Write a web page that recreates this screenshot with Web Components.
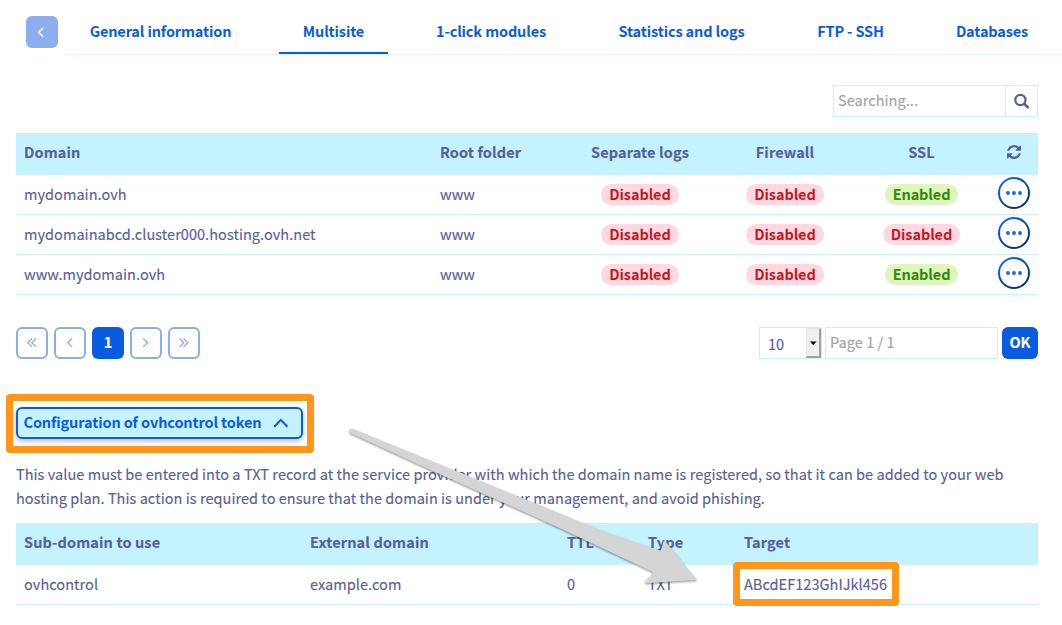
<!DOCTYPE html>
<html lang="en">
<head>
<meta charset="utf-8">
<title>Multisite</title>
<style>
  html, body { margin: 0; background: #fff; }
  body {
    width: 1062px; height: 625px; overflow: hidden; position: relative;
    font-family: "Noto Sans CJK SC", "Open Sans", sans-serif;
    font-size: 14.5px; line-height: 24px; letter-spacing: .05px; color: #565f9f;
    -webkit-text-stroke: .15px currentColor;
    --blue: #095ce0; --ice: #c5f2ff; --pale: #8aaeee;
  }
  main { display: block; padding: 0 24px 0 16px; }
</style>
</head>
<body>
<tab-bar>
  <tab-item style="--w:189px">General information</tab-item>
  <tab-item style="--w:109px" active>Multisite</tab-item>
  <tab-item style="--w:158px">1-click modules</tab-item>
  <tab-item style="--w:175px">Statistics and logs</tab-item>
  <tab-item style="--w:115px">FTP - SSH</tab-item>
  <tab-item style="--w:120px">Databases</tab-item>
</tab-bar>
<main>
  <search-box>Searching...</search-box>

  <data-grid style="--cols:416px 136px 144px 146px 127px 53px">
    <grid-row head>
      <grid-cell>Domain</grid-cell><grid-cell>Root folder</grid-cell>
      <grid-cell mid>Separate logs</grid-cell><grid-cell mid>Firewall</grid-cell>
      <grid-cell mid>SSL</grid-cell><grid-cell end><refresh-icon></refresh-icon></grid-cell>
    </grid-row>
    <grid-row>
      <grid-cell>mydomain.ovh</grid-cell><grid-cell>www</grid-cell>
      <grid-cell mid><state-badge>Disabled</state-badge></grid-cell>
      <grid-cell mid><state-badge>Disabled</state-badge></grid-cell>
      <grid-cell mid><state-badge on>Enabled</state-badge></grid-cell>
      <grid-cell end><more-button></more-button></grid-cell>
    </grid-row>
    <grid-row>
      <grid-cell>mydomainabcd.cluster000.hosting.ovh.net</grid-cell><grid-cell>www</grid-cell>
      <grid-cell mid><state-badge>Disabled</state-badge></grid-cell>
      <grid-cell mid><state-badge>Disabled</state-badge></grid-cell>
      <grid-cell mid><state-badge>Disabled</state-badge></grid-cell>
      <grid-cell end><more-button></more-button></grid-cell>
    </grid-row>
    <grid-row>
      <grid-cell>www.mydomain.ovh</grid-cell><grid-cell>www</grid-cell>
      <grid-cell mid><state-badge>Disabled</state-badge></grid-cell>
      <grid-cell mid><state-badge>Disabled</state-badge></grid-cell>
      <grid-cell mid><state-badge on>Enabled</state-badge></grid-cell>
      <grid-cell end><more-button></more-button></grid-cell>
    </grid-row>
  </data-grid>

  <page-nav></page-nav>
  <token-toggle>Configuration of ovhcontrol token</token-toggle>
  <help-text>This value must be entered into a TXT record at the service provider with which the domain name is registered, so that it can be added to your web<br>hosting plan. This action is required to ensure that the domain is under your management, and avoid phishing.</help-text>

  <data-grid style="--cols:286px 257px 81px 96px 302px">
    <grid-row head>
      <grid-cell>Sub-domain to use</grid-cell><grid-cell>External domain</grid-cell>
      <grid-cell>TTL</grid-cell><grid-cell>Type</grid-cell><grid-cell>Target</grid-cell>
    </grid-row>
    <grid-row>
      <grid-cell>ovhcontrol</grid-cell><grid-cell>example.com</grid-cell>
      <grid-cell>0</grid-cell><grid-cell>TXT</grid-cell><grid-cell>ABcdEF123GhIJkl456</grid-cell>
    </grid-row>
  </data-grid>
</main>
<focus-frame style="left:6px;top:394px;width:308px;height:59px"></focus-frame>
<focus-frame style="left:733px;top:562px;width:166px;height:44px"></focus-frame>
<pointer-arrow></pointer-arrow>

<script>
const define = (name, css, html) => {
  const t = document.createElement('template');
  t.innerHTML = `<style>*{box-sizing:border-box}:host{box-sizing:border-box}${css}</style>${html}`;
  customElements.define(name, class extends HTMLElement {
    constructor() {
      super();
      this.attachShadow({ mode: 'open' }).append(t.content.cloneNode(true));
    }
  });
};

define('tab-bar', `
  :host{display:flex;height:55px}
  .back{width:32px;height:32px;margin:16px 8px 0 26px;border-radius:6px;background:var(--pale);flex:none}
  svg{display:block}
  nav{flex:1;display:flex;gap:24px;border-bottom:1px solid #dff8ff}`,
  `<div class="back"><svg width="32" height="32" fill="none" stroke="#fff" stroke-width="1.5"><path d="M17 12l-4.2 4.3 4.2 4.3"/></svg></div>
   <nav><slot></slot></nav>`);

define('tab-item', `
  :host{display:block;flex:none;width:var(--w);height:54px;padding-top:19px;text-align:center;font-weight:700;color:var(--blue);white-space:nowrap;letter-spacing:-.14px;-webkit-text-stroke:0}
  :host([active]){border-bottom:2px solid var(--blue)}`, `<slot></slot>`);

define('search-box', `
  :host{display:flex;width:205px;height:32px;margin:30px 0 16px auto;border:1px solid var(--ice)}
  .field{flex:1;padding:2px 4px;color:#a3a3a3}
  .go{width:32px;border-left:1px solid var(--ice)}
  svg{display:block}`,
  `<div class="field"><slot></slot></div>
   <div class="go"><svg width="31" height="30" fill="none" stroke="#565f9f"><circle cx="14.4" cy="14" r="5.1" stroke-width="2.2"/><path d="M18.2 17.8l3.6 3.6" stroke-width="2.7" stroke-linecap="round"/></svg></div>`);

define('data-grid', `:host{display:block}`, `<slot></slot>`);

define('grid-row', `
  :host{display:grid;grid-template-columns:var(--cols);align-items:start;height:40px;padding-top:7px;border-bottom:1px solid var(--ice)}
  :host([head]){height:42px;border:0;background:var(--ice);font-weight:700;letter-spacing:.13px}`, `<slot></slot>`);

define('grid-cell', `
  :host{display:flex;align-items:center;padding-left:8px;height:24px;white-space:nowrap}
  :host([mid]){padding:0;justify-content:center}
  :host([end]){padding:0 8px 0 0;justify-content:flex-end}`, `<slot></slot>`);

define('state-badge', `
  :host{display:block;height:21px;line-height:20px;margin-top:1px;padding:0 8px;border-radius:11px;background:#ffd8e2;color:#c5181c;font-weight:700;letter-spacing:-.1px;-webkit-text-stroke:0}
  :host([on]){background:#dff4bf;color:#318a00}`, `<slot></slot>`);

define('refresh-icon', `:host{display:block;margin-right:9px}svg{display:block}`,
  `<svg width="14" height="14" viewBox="0 0 1536 1536" fill="#565f9f"><path d="M1511 928q0 5-1 7-64 268-268 434.500T764 1536q-146 0-282.500-55T238 1324l-129 129q-19 19-45 19t-45-19-19-45V960q0-26 19-45t45-19h448q26 0 45 19t19 45-19 45l-137 137q71 66 161 102t187 36q134 0 250-65t186-179q11-17 53-117 8-23 30-23h192q13 0 22.500 9.500t9.500 22.500zM1536 128v448q0 26-19 45t-45 19h-448q-26 0-45-19t-19-45 19-45l138-138Q969 256 768 256q-134 0-250 65T332 500q-11 17-53 117-8 23-30 23H50q-13 0-22.500-9.500T18 608v-7q65-268 270-434.500T768 0q146 0 284 55.500T1297 212l130-129q19-19 45-19t45 19 19 45z"/></svg>`);

define('more-button', `:host{display:block;margin-top:-2px}svg{display:block}`,
  `<svg width="32" height="32"><defs><linearGradient id="g" x1="0" y1="0" x2=".6" y2="1"><stop offset=".25" stop-color="#0b60ea"/><stop offset="1" stop-color="#06306f"/></linearGradient></defs>
   <circle cx="16" cy="16" r="15" fill="#fff" stroke="url(#g)" stroke-width="2"/>
   <g fill="#1464e4"><circle cx="10" cy="16" r="1.9"/><circle cx="16" cy="16" r="1.9"/><circle cx="22" cy="16" r="1.9"/></g></svg>`);

define('page-nav', `
  :host{display:flex;height:32px;margin-top:32px}
  .b{width:32px;height:32px;margin-right:6px;border:2px solid var(--pale);border-radius:6px}
  .b svg{display:block;fill:none;stroke:var(--pale);stroke-width:1.3}
  .cur,.ok{background:var(--blue);color:#fff;border:0;border-radius:6px;font-weight:700;text-align:center;line-height:30px}
  .size{margin-left:auto;display:flex;width:63px;border:1px solid var(--ice);color:#565f9f}
  .size span{flex:1;padding:4px 0 0 8px}
  .drop{width:15px;height:30px;background:#f0f0f0;border:solid;border-width:1px 2px 2px 1px;border-color:#e3e3e3 #a0a0a0 #a0a0a0 #e3e3e3}
  .drop svg{display:block}
  .page{width:173px;margin:0 4px 0 3px;border:1px solid var(--ice);padding:2px 4px;color:#a3a3a3}
  .ok{width:36px}`,
  `<div class="b"><svg width="28" height="28"><path d="M14 9.500l-4.200 4.200 4.200 4.200M18 9.500l-4.200 4.200 4.200 4.200"/></svg></div>
   <div class="b"><svg width="28" height="28"><path d="M16 9.500l-4.200 4.200 4.200 4.200"/></svg></div>
   <div class="b cur">1</div>
   <div class="b"><svg width="28" height="28"><path d="M11.300 9.500l4.200 4.200-4.200 4.200"/></svg></div>
   <div class="b"><svg width="28" height="28"><path d="M9.600 9.500l4.200 4.200-4.200 4.200M13.600 9.500l4.200 4.200-4.200 4.200"/></svg></div>
   <div class="size"><span>10</span><div class="drop"><svg width="12" height="27"><path d="M3 12.500h6.500l-3.250 3.800z" fill="#000"/></svg></div></div>
   <div class="page">Page 1 / 1</div><div class="ok">OK</div>`);

define('token-toggle', `
  :host{display:flex;width:287px;height:32px;line-height:26px;margin-top:48px;border:2px solid var(--blue);border-radius:6px;background:var(--ice);box-shadow:0 2px 5px rgba(70,80,160,.4);color:var(--blue);font-weight:700;padding-left:5.5px;white-space:nowrap;letter-spacing:-.12px;-webkit-text-stroke:0}
  svg{margin-left:auto}`,
  `<slot></slot><svg width="39" height="28" fill="none" stroke="#095ce0" stroke-width="2"><path d="M12.200 17.700l6.600-6.800 6.600 6.800"/></svg>`);

define('help-text', `:host{display:block;margin:23px 0 13px;white-space:nowrap}`, `<slot></slot>`);

define('focus-frame', `:host{position:absolute;border:7px solid #ff9519;border-radius:4px}`, ``);

define('pointer-arrow', `:host{position:absolute;left:340px;top:420px}svg{display:block;filter:drop-shadow(0 1.500px 1px rgba(0,0,0,.45))}`,
  `<svg width="370" height="180" viewBox="340 420 370 180"><path d="M352.500 428.700L430 460.600 560 513.500Q608 535 660.700 550.700L664 540 697 580 644.300 583.300 653.300 572.300 560 528.300 430 469.800 350 433Q348 429 352.500 428.700z" fill="#d5d5d5"/></svg>`);
</script>
</body>
</html>
